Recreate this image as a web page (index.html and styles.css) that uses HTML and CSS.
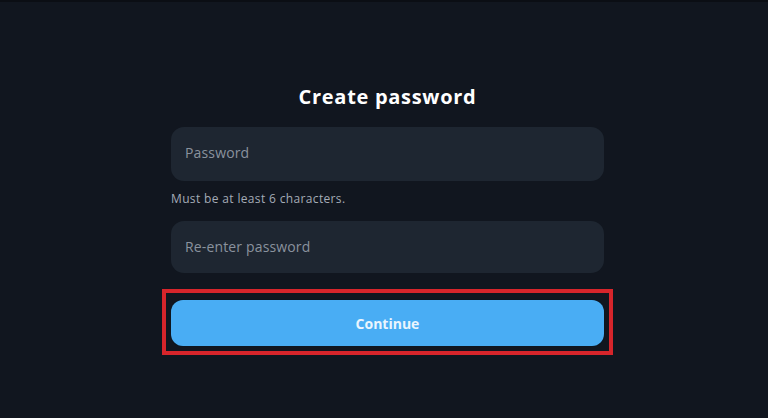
FILE: index.html
```html
<!DOCTYPE html>
<html lang="en">
<head>
<meta charset="utf-8">
<title>Create password</title>
<link rel="stylesheet" href="styles.css">
</head>
<body>
<main class="form">
  <h1 class="title">Create password</h1>
  <div class="field"><span class="placeholder">Password</span></div>
  <p class="hint">Must be at least 6 characters.</p>
  <div class="field field-second"><span class="placeholder">Re-enter password</span></div>
  <div class="highlight">
    <button class="btn" type="button">Continue</button>
  </div>
</main>
</body>
</html>
```
FILE: styles.css
```css
html, body {
  margin: 0;
  padding: 0;
  background: #11161f;
  height: 100%;
}
body {
  font-family: "Open Sans", "Liberation Sans", sans-serif;
  overflow: hidden;
  border-top: 2px solid #0b0e14;
  box-sizing: border-box;
}
.form {
  width: 433px;
  margin-left: 171px;
  display: flex;
  flex-direction: column;
}
.title {
  margin: 82px 0 0;
  text-align: center;
  color: #ffffff;
  font-size: 20px;
  font-weight: 700;
  line-height: 26px;
  letter-spacing: 0.7px;
}
.field {
  margin-top: 17px;
  height: 54px;
  border-radius: 13px;
  background: #1e2631;
  display: flex;
  align-items: center;
  padding-left: 14px;
  padding-bottom: 3px;
  box-sizing: border-box;
}
.placeholder {
  color: #8a929e;
  font-size: 14px;
  letter-spacing: 0.15px;
}
.hint {
  margin: 10px 0 0;
  color: #a4abb6;
  font-size: 12px;
  line-height: 15px;
  letter-spacing: 0.35px;
}
.field-second {
  margin-top: 15px;
  height: 52px;
  padding-bottom: 2px;
}
.highlight {
  margin: 16px -9px 0;
  border: 4px solid #d7252b;
  padding: 7px 5px 5px;
}
.btn {
  display: block;
  width: 100%;
  height: 46px;
  border: none;
  border-radius: 12px;
  background: #49adf4;
  color: #eaf5fe;
  font-family: inherit;
  font-size: 14px;
  font-weight: 700;
  box-shadow: 0 0 0 1px #0d1620;
}
```
